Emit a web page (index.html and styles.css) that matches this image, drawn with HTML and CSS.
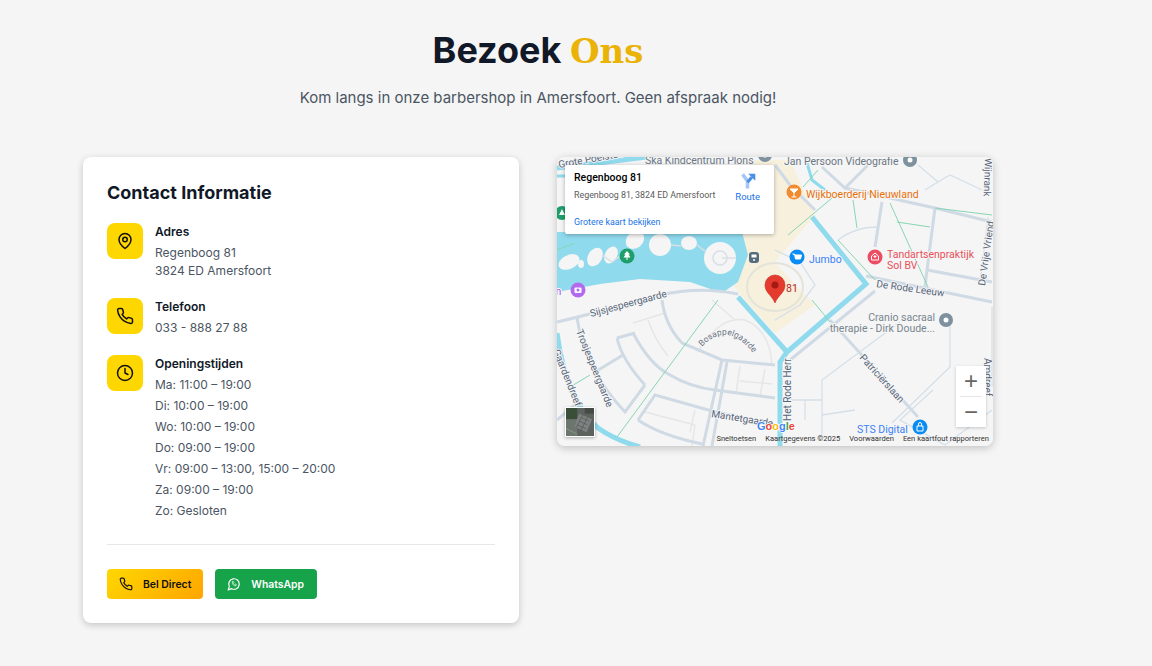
FILE: index.html
```html
<!DOCTYPE html>
<html lang="nl">
<head>
	<title>Bezoek Ons</title>
	<meta charset="UTF-8">
	<link rel="stylesheet" href="styles.css">
</head>
<body>
<section class="visit">
	<header class="intro">
		<h1>Bezoek <span class="accent">Ons</span></h1>
		<p>Kom langs in onze barbershop in Amersfoort. Geen afspraak nodig!</p>
	</header>
	<div class="columns">
		<div class="card">
			<h2>Contact Informatie</h2>
			<div class="row">
				<div class="badge">
					<svg class="ico" viewBox="0 0 24 24"><path d="M20 10c0 6-8 12-8 12s-8-6-8-12a8 8 0 0 1 16 0Z"/><circle cx="12" cy="10" r="3"/></svg>
				</div>
				<div>
					<h3>Adres</h3>
					<p>Regenboog 81</p>
					<p>3824 ED Amersfoort</p>
				</div>
			</div>
			<div class="row">
				<div class="badge">
					<svg class="ico" viewBox="0 0 24 24"><path d="M22 16.92v3a2 2 0 0 1-2.18 2 19.8 19.8 0 0 1-8.63-3.07 19.5 19.5 0 0 1-6-6 19.8 19.8 0 0 1-3.07-8.67A2 2 0 0 1 4.11 2h3a2 2 0 0 1 2 1.72 12.8 12.8 0 0 0 .7 2.81 2 2 0 0 1-.45 2.11L8.09 9.91a16 16 0 0 0 6 6l1.27-1.27a2 2 0 0 1 2.11-.45 12.8 12.8 0 0 0 2.81.7A2 2 0 0 1 22 16.92Z"/></svg>
				</div>
				<div>
					<h3>Telefoon</h3>
					<p>033 - 888 27 88</p>
				</div>
			</div>
			<div class="row">
				<div class="badge">
					<svg class="ico" viewBox="0 0 24 24"><circle cx="12" cy="12" r="10"/><path d="M12 6v6l4 2"/></svg>
				</div>
				<div>
					<h3 class="hours-title">Openingstijden</h3>
					<ul class="hours">
						<li>Ma: 11:00 – 19:00</li>
						<li>Di: 10:00 – 19:00</li>
						<li>Wo: 10:00 – 19:00</li>
						<li>Do: 09:00 – 19:00</li>
						<li>Vr: 09:00 – 13:00, 15:00 – 20:00</li>
						<li>Za: 09:00 – 19:00</li>
						<li>Zo: Gesloten</li>
					</ul>
				</div>
			</div>
			<div class="actions">
				<a class="btn btn-call">
					<svg class="ico-sm" viewBox="0 0 24 24"><path d="M22 16.92v3a2 2 0 0 1-2.18 2 19.8 19.8 0 0 1-8.63-3.07 19.5 19.5 0 0 1-6-6 19.8 19.8 0 0 1-3.07-8.67A2 2 0 0 1 4.11 2h3a2 2 0 0 1 2 1.72 12.8 12.8 0 0 0 .7 2.81 2 2 0 0 1-.45 2.11L8.09 9.91a16 16 0 0 0 6 6l1.27-1.27a2 2 0 0 1 2.11-.45 12.8 12.8 0 0 0 2.81.7A2 2 0 0 1 22 16.92Z"/></svg>
					Bel Direct
				</a>
				<a class="btn btn-wa">
					<svg class="ico-sm" viewBox="0 0 24 24"><path d="M7.9 20A9 9 0 1 0 4 16.1L2 22Z"/><path class="wa-phone" d="M9 8.500c-.6 4 3 7.500 6.500 6.500l.5-2-2-1-1 .8c-.8-.4-1.400-1-1.800-1.800l.8-1-1-2Z"/></svg>
					WhatsApp
				</a>
			</div>
		</div>

		<div class="map">
			<svg class="map-art" viewBox="557 157 436 289">
				<rect x="557" y="156" width="436" height="290" fill="#f5f5f5"/>
				<!-- built up area -->
				<path class="area" d="M745 160H790L815 215L775 262L800 290L815 305L775 333L745 300L733 285L740 234Z"/>
				<!-- water -->
				<path class="lake" d="M557 232H742L748 255L738 282L722 293L690 282L640 279L600 284L557 292Z"/>
				<g class="island">
					<ellipse cx="569" cy="262" rx="11" ry="7" transform="rotate(-25 569 262)"/>
					<ellipse cx="581" cy="264" rx="3" ry="4"/>
					<ellipse cx="595" cy="257" rx="7" ry="10" transform="rotate(30 595 257)"/>
					<ellipse cx="611" cy="255" rx="6" ry="9" transform="rotate(30 611 255)"/>
					<ellipse cx="635" cy="240" rx="8" ry="10" transform="rotate(50 635 240)"/>
					<circle cx="660" cy="245" r="11"/>
					<ellipse cx="689" cy="243" rx="8" ry="7"/>
					<circle cx="720" cy="258" r="16"/>
				</g>
				<path class="lake-path" d="M602 255L612 262L628 250M671 245L681 246M697 245L706 252M722 258H736"/>
				<circle class="lake-path" cx="720" cy="258" r="7"/>
				<path class="water" d="M557 168L655 156"/>
				<path class="water-thin" d="M557 176H575M805 156L812 180L825 190"/>
				<path class="water" d="M812 217L866 284L787 352L780 362V446"/>
				<path class="water" d="M738 297L787 352"/>
				<path class="water" d="M557 333Q566 400 598 428Q615 440 640 447"/>

				<!-- streets -->
				<g class="minor">
					<path d="M698 352Q720 315 745 320Q770 330 772 365"/>
					<path d="M633 323L665 313M648 320Q655 340 668 356"/>
					<path d="M740 366L736 394M765 369L760 396M740 381L772 384"/>
					<path d="M645 412L695 425M695 410L690 432M695 425L692 446"/>
					<path d="M712 300L735 320"/>
				</g>
				<g class="road">
					<path d="M557 322Q600 312 660 295Q700 286 738 294"/>
					<path d="M577 318Q585 370 625 412L645 385"/>
					<path d="M595 372L623 355M617 338Q622 360 645 385M617 338L635 333"/>
					<path d="M633 333Q650 365 670 375Q690 387 715 390L775 398"/>
					<path d="M638 420L655 395L712 411L775 425"/>
					<path d="M638 420Q660 435 702 444"/>
					<path d="M722 360L703 446M727 362L712 446"/>
					<path d="M662 300Q665 325 682 343L722 360L775 365"/>
					<path d="M557 420L575 405"/>
					<path d="M822 167L845 188L935 208L992 222M845 188L870 163"/>
					<path d="M882 202L875 247"/>
					<path d="M935 208L927 270L924 295"/>
					<path d="M927 270L992 282"/>
					<path d="M866 276L992 302"/>
					<path d="M790 360L875 291"/>
					<path d="M830 320L918 417"/>
					<path d="M775 165L790 185L815 210"/>
				</g>
				<g class="thin">
					<path d="M775 250L800 262L815 285L800 305L775 320"/>
					<path d="M822 436V380L900 322"/>
					<path d="M950 317V367L892 423"/>
					<path d="M992 307V387"/>
					<path d="M980 283L988 217"/>
					<path d="M838 240Q855 227 878 227"/>
					<path d="M822 400H805V420M805 400H790M822 415L855 410"/>
					<path d="M918 165L938 182L950 175L982 190M938 182L925 190"/>
					<path d="M933 390L900 420L945 445L992 410"/>
				</g>
				<g class="green">
					<path d="M718 300L617 437"/>
					<path d="M590 375L570 387"/>
					<path d="M853 200L857 228M890 203L928 287M897 222L930 227M935 208L992 215"/>
					<path d="M818 170L803 187M832 198L788 235M838 240L875 280"/>
					<path d="M812 300L830 322"/>
					<path d="M557 250L575 243"/>
				</g>

				<!-- street names -->
				<g class="street">
					<text x="559" y="168" transform="rotate(-10 559 168)">Grote Poelstee</text>
					<text x="591" y="317" transform="rotate(-15 591 317)">Sijsjespeergaarde</text>
					<text x="576" y="331" transform="rotate(68 576 331)">Trosjespeergaarde</text>
					<text x="553" y="351" transform="rotate(68 553 351)">Gaardendreef</text>
					<text x="711" y="417" transform="rotate(9 711 417)">Mantetgaarde</text>
					<text x="876" y="287" transform="rotate(8 876 287)">De Rode Leeuw</text>
					<text x="985" y="286" transform="rotate(-82 985 286)">De Vrije Vriend</text>
					<text x="859" y="358" transform="rotate(48 859 358)">Patriciërslaan</text>
					<text x="791" y="421" transform="rotate(-90 791 421)">Het Rode Herr</text>
					<text x="984" y="358" transform="rotate(90 984 358)">Amdreef</text>
					<text x="985" y="158" transform="rotate(92 985 158)">Wijnrank</text>
					<path id="bosappel" fill="none" d="M702 347Q728 318 757 358"/>
					<text class="small"><textPath href="#bosappel">Bosappelgaarde</textPath></text>
				</g>

				<!-- places -->
				<g class="poi-text">
					<text x="645" y="164" fill="#6b7785">Ska Kindcentrum Plons</text>
					<text x="784" y="165" fill="#6b7785">Jan Persoon Videografie</text>
					<text x="806" y="198" fill="#e8710a">Wijkboerderij Nieuwland</text>
					<text x="809" y="263" fill="#3b82f6">Jumbo</text>
					<text x="887" y="258" fill="#e8505b">Tandartsenpraktijk</text>
					<text x="887" y="269" fill="#e8505b">Sol BV</text>
					<text x="935" y="321" text-anchor="end" fill="#78858f">Cranio sacraal</text>
					<text x="935" y="332" text-anchor="end" fill="#78858f">therapie - Dirk Doude...</text>
					<text x="857" y="433" fill="#3b82f6">STS Digital</text>
					<text x="553" y="295" fill="#a855f7">in</text>
				</g>
				<g class="pin">
					<circle cx="765" cy="155" r="7" fill="#7e919e"/><circle cx="765" cy="155" r="2.500" fill="#fff"/>
					<circle cx="910" cy="160" r="7" fill="#7e919e"/><circle cx="910" cy="160" r="2.500" fill="#fff"/>
					<circle cx="946" cy="320" r="7" fill="#7e919e"/><circle cx="946" cy="320" r="2.500" fill="#fff"/>
					<circle cx="794" cy="192" r="7.500" fill="#f28b2e"/><path d="M790 189h8l-4 4ZM794 192v5M791.500 197h5" fill="#fff" stroke="#fff"/>
					<circle cx="797" cy="257" r="7.500" fill="#0a8cf5"/><path d="M792.500 254h2l1 5h5l1-4h-6.500" fill="#fff" stroke="#fff"/>
					<circle cx="875" cy="257" r="7.500" fill="#ee4c62"/><path d="M871.500 256l3.500-3 3.500 3v4h-7Z" fill="none" stroke="#fff"/><path d="M875 255v3M873.500 256.500h3" stroke="#fff"/>
					<circle cx="920" cy="427" r="7.500" fill="#0a8cf5"/><path d="M917 426h6v5h-6ZM918.500 426v-2a1.500 1.500 0 0 1 3 0v2" fill="none" stroke="#fff"/>
					<circle cx="627" cy="256" r="7.500" fill="#1e9e6a"/><path d="M627 251l3 3.500h-1.500l2 3h-7l2-3h-1.500ZM626.500 257h1v3h-1Z" fill="#fff"/>
					<circle cx="562" cy="213" r="7" fill="#1e9e6a"/><path d="M562 209l3 6h-6Z" fill="#fff"/>
					<circle cx="578" cy="290" r="7.500" fill="#b26bf0"/><rect x="574.500" y="287.500" width="7" height="5.500" rx="1" fill="#fff"/><circle cx="578" cy="290" r="1.500" fill="#b26bf0"/>
					<rect x="749" y="252" width="10" height="11" rx="3" fill="#566b7c"/><rect x="751.500" y="254.500" width="5" height="3" fill="#fff"/><circle cx="754" cy="260" r="1" fill="#fff"/>
				</g>

				<!-- marker -->
				<ellipse cx="775" cy="287" rx="28" ry="24" fill="none" stroke="#e4e3da" stroke-width="2"/>
				<path d="M775 303C772 295 765 293 765 285A10 10 0 0 1 785 285C785 293 778 295 775 303Z" fill="#e53a2e" stroke="#c5281e" stroke-width=".6"/>
				<circle cx="775" cy="285" r="3.500" fill="#a51a12"/>
				<text class="house" x="786" y="292">81</text>

				<text class="google" x="757" y="430"><tspan fill="#4285f4">G</tspan><tspan fill="#ea4335">o</tspan><tspan fill="#fbbc05">o</tspan><tspan fill="#4285f4">g</tspan><tspan fill="#34a853">l</tspan><tspan fill="#ea4335">e</tspan></text>
			</svg>

			<div class="place">
				<div class="place-info">
					<div class="place-name">Regenboog 81</div>
					<div class="place-addr">Regenboog 81, 3824 ED Amersfoort</div>
					<a class="place-link">Grotere kaart bekijken</a>
				</div>
				<a class="route">
					<svg viewBox="0 0 24 24" class="route-ico">
						<path d="M5 2L12 11V22" fill="none" stroke="#a7c6f5" stroke-width="5"/>
						<path d="M12 13L18 6" fill="none" stroke="#4a90e2" stroke-width="4.500"/>
						<path d="M13 1H23V11Z" fill="#4a90e2"/>
					</svg>
					Route
				</a>
			</div>

			<div class="thumb">
				<svg viewBox="0 0 30 30">
					<rect width="30" height="30" fill="#5d625e"/>
					<rect width="12" height="12" fill="#3a4f38"/>
					<rect y="12" width="12" height="18" fill="#6c766d"/>
					<path d="M14 6L28 12L22 26L9 20Z" fill="#7d8280"/>
					<path d="M16 10L25 14M14 14L23 18M12 18L21 22M18 7L11 21M23 10L16 24" stroke="#55595a" stroke-width=".8"/>
					<rect x="20" width="10" height="6" fill="#444a44"/>
					<path d="M0 22L12 28" stroke="#8f9890"/>
				</svg>
			</div>

			<div class="zoom">
				<span class="zoom-btn">+</span>
				<span class="zoom-line"></span>
				<span class="zoom-btn">−</span>
			</div>

			<div class="attrib">
				<span>Sneltoetsen</span>
				<span>Kaartgegevens ©2025</span>
				<span>Voorwaarden</span>
				<span>Een kaartfout rapporteren</span>
			</div>
		</div>
	</div>
</section>
</body>
</html>
```

FILE: styles.css
```css
* {
	box-sizing: border-box;
}
body {
	margin: 0;
	background: #f5f5f5;
	font-family: Inter, "Liberation Sans", sans-serif;
	color: #111827;
}
.visit {
	width: 1076px;
	padding: 30px 83px 42px;
}
.intro {
	text-align: center;
	margin-bottom: 47px;
}
h1 {
	margin: 0;
	font-size: 36px;
	line-height: 40px;
	font-weight: 700;
}
.accent {
	font-family: "DejaVu Serif", serif;
	font-size: 34px;
	color: #eab308;
}
.intro p {
	margin: 15px 0 0;
	font-size: 15px;
	line-height: 24px;
	color: #4b5563;
}
.columns {
	display: grid;
	grid-template-columns: 436px 436px;
	gap: 38px;
	align-items: start;
}
.card {
	background: #fff;
	border-radius: 8px;
	padding: 24px;
	height: 466px;
	box-shadow: 0 2px 7px rgba(0, 0, 0, 0.2);
}
h2 {
	margin: 0 0 18px;
	font-size: 18px;
	line-height: 24px;
	font-weight: 700;
}
.row {
	display: flex;
	gap: 12px;
	margin-bottom: 18px;
}
.badge {
	flex: none;
	width: 36px;
	height: 36px;
	border-radius: 8px;
	background: #ffd700;
	display: flex;
	align-items: center;
	justify-content: center;
}
.ico {
	width: 18px;
	height: 18px;
	fill: none;
	stroke: #111;
	stroke-width: 2;
	stroke-linecap: round;
	stroke-linejoin: round;
}
.ico-sm {
	width: 14px;
	height: 14px;
	fill: none;
	stroke: currentColor;
	stroke-width: 2;
	stroke-linecap: round;
	stroke-linejoin: round;
}
.wa-phone {
	stroke-width: 1.200;
}
h3 {
	margin: 0 0 4px;
	font-size: 12px;
	line-height: 17px;
	font-weight: 600;
}
h3.hours-title {
	margin-bottom: 2px;
}
.row p {
	margin: 0;
	font-size: 12px;
	line-height: 18px;
	color: #4b5563;
}
.hours {
	list-style: none;
	margin: 0;
	padding: 0;
	font-size: 12px;
	line-height: 21px;
	color: #4b5563;
}
.actions {
	display: flex;
	gap: 12px;
	margin-top: 23px;
	padding-top: 24px;
	border-top: 1px solid #e5e7eb;
}
.btn {
	display: flex;
	align-items: center;
	gap: 10px;
	height: 30px;
	padding: 0 12px;
	border-radius: 4px;
	font-size: 10.400px;
	font-weight: 600;
}
.btn-call {
	background: linear-gradient(135deg, #ffd700, #ffa500);
	color: #111;
}
.btn-wa {
	background: #16a34a;
	color: #fff;
	padding-right: 13px;
}
.map {
	position: relative;
	height: 289px;
	border-radius: 8px;
	overflow: hidden;
	box-shadow: 0 2px 8px rgba(0, 0, 0, 0.22);
}
.map-art {
	display: block;
	width: 436px;
	height: 289px;
}
.area {
	fill: #f7f0dd;
}
.lake {
	fill: #90daee;
}
.island {
	fill: #f5f5f5;
}
.lake-path {
	fill: none;
	stroke: #d9dfe4;
	stroke-width: 1.500;
}
.water {
	fill: none;
	stroke: #90daee;
	stroke-width: 5;
}
.water-thin {
	fill: none;
	stroke: #90daee;
	stroke-width: 3;
}
.road path {
	fill: none;
	stroke: #cfdae4;
	stroke-width: 3;
}
.minor path {
	fill: none;
	stroke: #e5e6e7;
	stroke-width: 1.500;
}
.thin path {
	fill: none;
	stroke: #d5dfe8;
	stroke-width: 1.300;
}
.green path {
	fill: none;
	stroke: #87d5b4;
	stroke-width: 1;
}
.street text {
	font-family: Roboto, sans-serif;
	font-size: 10px;
	fill: #56657a;
	stroke: #f5f5f5;
	stroke-width: 2;
	paint-order: stroke;
}
.street .small {
	font-size: 8.500px;
	fill: #6b7280;
}
.poi-text text {
	font-family: Roboto, sans-serif;
	font-size: 10.500px;
	stroke: #f5f5f5;
	stroke-width: 2;
	paint-order: stroke;
}
.house {
	font-family: Roboto, sans-serif;
	font-size: 10.500px;
	fill: #b3261e;
}
.google {
	font-family: "Liberation Sans", sans-serif;
	font-size: 11px;
	font-weight: 700;
	stroke: #fff;
	stroke-width: 1.500;
	paint-order: stroke;
}
.place {
	position: absolute;
	left: 8px;
	top: 8px;
	width: 209px;
	height: 69px;
	background: #fff;
	border-radius: 2px;
	box-shadow: 0 1px 4px rgba(0, 0, 0, 0.3);
	font-family: Roboto, sans-serif;
	padding: 6px 9px;
	display: flex;
	justify-content: space-between;
}
.place-name {
	font-size: 10.500px;
	line-height: 14px;
	font-weight: 500;
	color: #000;
}
.place-addr {
	margin-top: 4px;
	font-size: 8.900px;
	line-height: 12px;
	color: #5b5b5b;
}
.place-link {
	display: block;
	margin-top: 15px;
	font-size: 8.900px;
	line-height: 12px;
	color: #1a73e8;
}
.route {
	display: flex;
	flex-direction: column;
	align-items: center;
	gap: 1px;
	margin-top: 2px;
	margin-right: 5px;
	font-size: 9.500px;
	color: #1a73e8;
}
.route-ico {
	width: 17px;
	height: 17px;
}
.thumb {
	position: absolute;
	left: 8px;
	bottom: 9px;
	width: 30px;
	height: 30px;
	border: 1.500px solid #fff;
	box-shadow: 0 1px 3px rgba(0, 0, 0, 0.3);
}
.thumb svg {
	display: block;
	width: 100%;
	height: 100%;
}
.zoom {
	position: absolute;
	right: 7px;
	bottom: 19px;
	width: 30px;
	height: 61px;
	background: #fff;
	box-shadow: 0 1px 3px rgba(0, 0, 0, 0.2);
	display: flex;
	flex-direction: column;
	align-items: center;
}
.zoom-btn {
	height: 30px;
	font-family: "Liberation Sans", sans-serif;
	font-size: 24px;
	line-height: 30px;
	color: #666;
}
.zoom-line {
	width: 22px;
	height: 1px;
	flex: none;
	background: #e6e6e6;
}
.attrib {
	position: absolute;
	right: 4px;
	bottom: 2px;
	display: flex;
	gap: 9px;
	font-family: Roboto, sans-serif;
	font-size: 7.550px;
	line-height: 10px;
	color: #333;
}
```
